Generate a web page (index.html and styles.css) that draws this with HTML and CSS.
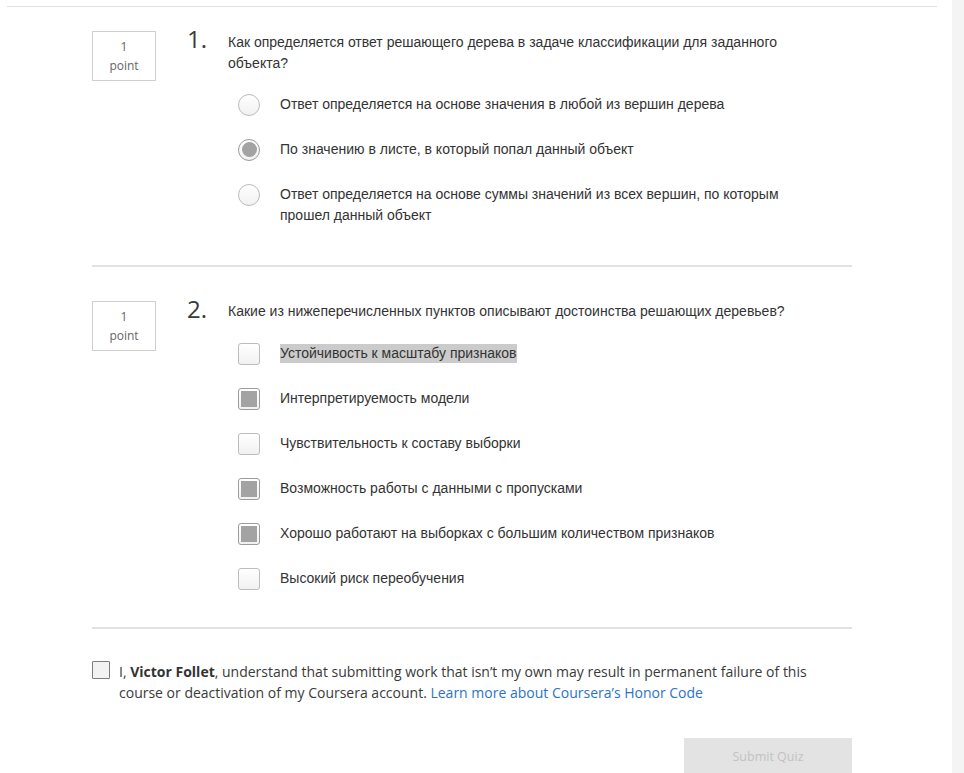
FILE: index.html
```html
<!DOCTYPE html>
<html lang="ru">
<head>
<meta charset="utf-8">
<title>Quiz</title>
<link rel="stylesheet" href="styles.css">
</head>
<body>
<div class="page">
  <div class="main">
    <div class="topline"></div>
    <div class="quiz">
      <section class="question">
        <div class="points">1<br>point</div>
        <div class="qnum">1.</div>
        <div class="qbody">
          <div class="qtext">Как определяется ответ решающего дерева в задаче классификации для заданного объекта?</div>
          <ul class="options">
            <li class="option"><span class="radio"></span><span class="label">Ответ определяется на основе значения в любой из вершин дерева</span></li>
            <li class="option"><span class="radio checked"></span><span class="label">По значению в листе, в который попал данный объект</span></li>
            <li class="option"><span class="radio"></span><span class="label">Ответ определяется на основе суммы значений из всех вершин, по которым прошел данный объект</span></li>
          </ul>
        </div>
      </section>
      <section class="question second">
        <div class="points">1<br>point</div>
        <div class="qnum">2.</div>
        <div class="qbody">
          <div class="qtext">Какие из нижеперечисленных пунктов описывают достоинства решающих деревьев?</div>
          <ul class="options">
            <li class="option"><span class="check"></span><span class="label"><span class="selected">Устойчивость к масштабу признаков</span></span></li>
            <li class="option"><span class="check checked"></span><span class="label">Интерпретируемость модели</span></li>
            <li class="option"><span class="check"></span><span class="label">Чувствительность к составу выборки</span></li>
            <li class="option"><span class="check checked"></span><span class="label">Возможность работы с данными с пропусками</span></li>
            <li class="option"><span class="check checked"></span><span class="label">Хорошо работают на выборках с большим количеством признаков</span></li>
            <li class="option"><span class="check"></span><span class="label">Высокий риск переобучения</span></li>
          </ul>
        </div>
      </section>
      <div class="honor">
        <span class="honor-box"></span>
        <p class="honor-text">I, <b>Victor Follet</b>, understand that submitting work that isn’t my own may result in permanent failure of this course or deactivation of my Coursera account. <a href="#" class="link">Learn more about Coursera’s Honor Code</a></p>
      </div>
      <div class="actions">
        <button class="submit" type="button">Submit Quiz</button>
      </div>
    </div>
  </div>
  <div class="sidebar"></div>
</div>
</body>
</html>
```
FILE: styles.css
```css
* { box-sizing: border-box; }
html, body { margin: 0; padding: 0; background: #fff; }
body {
  font-family: "Liberation Sans", Arial, sans-serif;
  color: #333;
  overflow: hidden;
}
.page {
  display: flex;
  min-height: 773px;
}
.main {
  flex: 1;
  padding: 6px 15px 0 7px;
}
.sidebar {
  width: 12px;
  background: #f4f4f4;
}
.topline {
  border-top: 1px solid #e2e2e2;
}
.quiz {
  margin-left: 85px;
  width: 760px;
  padding-top: 24px;
}
.question {
  display: flex;
  align-items: flex-start;
  padding: 0 0 39px;
  border-bottom: 2px solid #e2e2e2;
}
.question.second {
  padding-top: 34px;
  padding-bottom: 37px;
}
.question.second .options {
  margin-top: 21px;
}
.points {
  width: 64px;
  height: 50px;
  flex: none;
  border: 1px solid #cfcfcf;
  padding-top: 5px;
  text-align: center;
  font-family: "Open Sans", "Liberation Sans", sans-serif;
  font-size: 12px;
  line-height: 19px;
  color: #666;
}
.qnum {
  width: 41px;
  flex: none;
  margin-left: 31px;
  margin-top: -4px;
  font-family: "Open Sans", "Liberation Sans", sans-serif;
  font-weight: 400;
  font-size: 24px;
  line-height: 24px;
  color: #3a3a3a;
}
.qbody {
  width: 592px;
}
.qtext {
  font-size: 14px;
  line-height: 21px;
  padding-top: 0.5px;
}
.options {
  list-style: none;
  margin: 20px 0 0 10px;
  padding: 0;
}
.option {
  display: flex;
  align-items: flex-start;
  gap: 20px;
}
.option + .option {
  margin-top: 23px;
}
.label {
  font-size: 14px;
  line-height: 21px;
  flex: 1;
}
.selected {
  background: #cbcbcb;
  padding: 1px 0 2px;
}
.radio, .check {
  width: 22px;
  height: 22px;
  flex: none;
  border: 1px solid #bcbcbc;
  background: linear-gradient(#ffffff, #f1f1f1);
  display: flex;
  align-items: center;
  justify-content: center;
}
.radio { border-radius: 50%; }
.check { border-radius: 3px; }
.radio.checked, .check.checked { border-color: #9c9c9c; }
.radio.checked::after {
  content: "";
  width: 15px;
  height: 15px;
  border-radius: 50%;
  background: #a3a3a3;
}
.check.checked::after {
  content: "";
  width: 16px;
  height: 16px;
  background: #a3a3a3;
}
.honor {
  display: flex;
  align-items: flex-start;
  padding-top: 31px;
}
.honor-box {
  width: 18px;
  height: 18px;
  flex: none;
  border: 1px solid #7d7d7d;
  border-radius: 1px;
  background: #f2f2f2;
  margin-top: 1px;
  margin-right: 9px;
}
.honor-text {
  margin: 0;
  padding-top: 1px;
  font-family: "Open Sans", "Liberation Sans", sans-serif;
  font-size: 14px;
  line-height: 21px;
  color: #3a3a3a;
  width: 733px;
}
.honor-text b { font-weight: 700; color: #333; }
.link { color: #2a73cc; text-decoration: none; }
.actions {
  display: flex;
  justify-content: flex-end;
  margin-top: 35px;
}
.submit {
  width: 168px;
  height: 36px;
  border: none;
  background: #e3e3e3;
  color: #c2c2c2;
  font-family: "Open Sans", "Liberation Sans", sans-serif;
  font-size: 12.5px;
  padding: 0;
}
```
